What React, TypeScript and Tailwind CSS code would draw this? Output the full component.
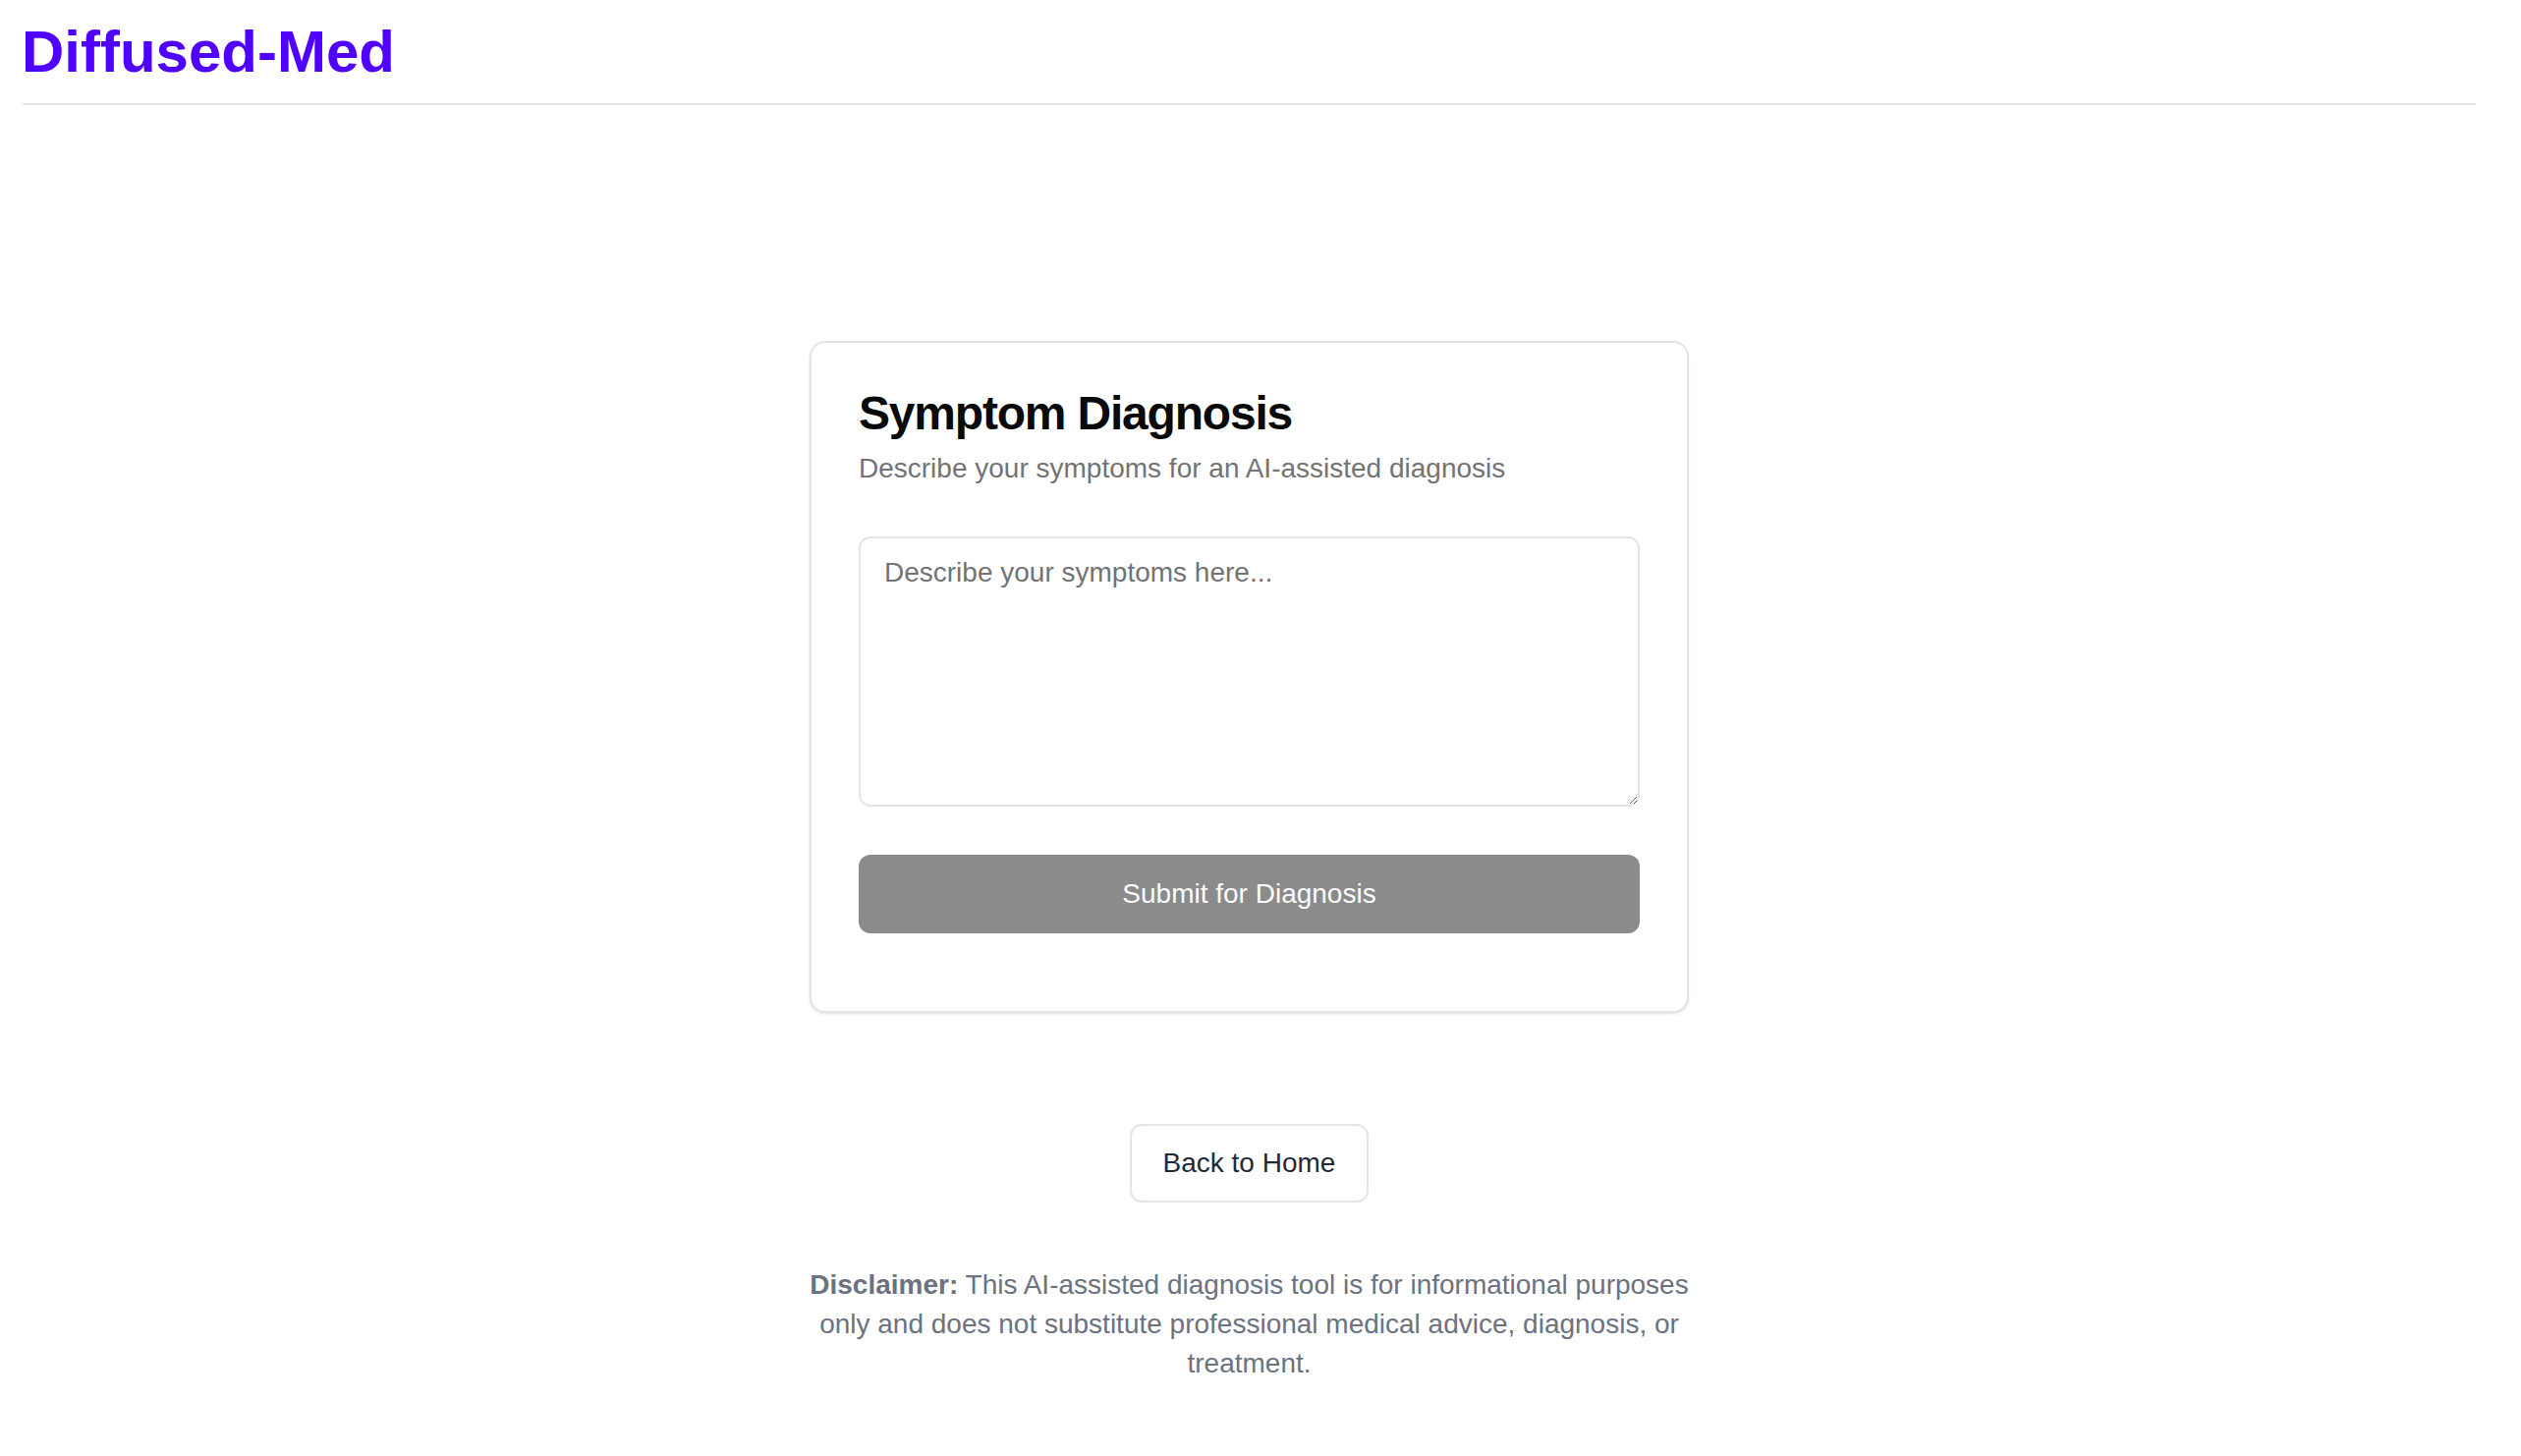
import React from "react";

export default function App() {
  return (
    <div className="min-h-screen bg-white font-['Liberation_Sans',Arial,sans-serif] pl-[23px] pr-[46px]">
      <header className="pt-[23px] pb-[22px] border-b-2 border-[#e5e5e5]">
        <h1 className="-ml-px text-[60px] leading-[60px] font-bold text-[#5000ff]">Diffused-Med</h1>
      </header>
      <main className="flex flex-col items-center pt-[240px]">
        <div className="w-[895px] rounded-2xl border-2 border-[#e5e5e5] bg-white shadow-sm px-[48px] pt-[48px] pb-[79px]">
          <h2 className="text-[48px] leading-[48px] font-bold tracking-tight text-[#0a0a0a]">Symptom Diagnosis</h2>
          <p className="mt-[12px] text-[28px] leading-[40px] text-[#737373]">
            Describe your symptoms for an AI-assisted diagnosis
          </p>
          <textarea
            className="mt-[49px] block w-full h-[275px] rounded-xl border-2 border-[#e5e5e5] bg-white px-[24px] py-[15px] text-[28px] leading-[40px] text-[#0a0a0a] placeholder:text-[#737373] outline-none"
            placeholder="Describe your symptoms here..."
          />
          <button
            disabled
            className="mt-[49px] flex h-[80px] w-full items-center justify-center rounded-xl bg-[#8b8b8b] text-[28px] text-[#fcfcfc]"
          >
            Submit for Diagnosis
          </button>
        </div>
        <button className="mt-[113px] flex h-[80px] items-center justify-center rounded-xl border-2 border-[#e5e5e5] bg-white px-[32px] text-[28px] text-[#1f2937]">
          Back to Home
        </button>
        <p className="mt-[64px] w-[895px] text-center text-[28px] leading-[40px] text-[#6b7280]">
          <span className="font-bold">Disclaimer:</span> This AI-assisted diagnosis tool is for informational purposes
          only and does not substitute professional medical advice, diagnosis, or treatment.
        </p>
      </main>
    </div>
  );
}
